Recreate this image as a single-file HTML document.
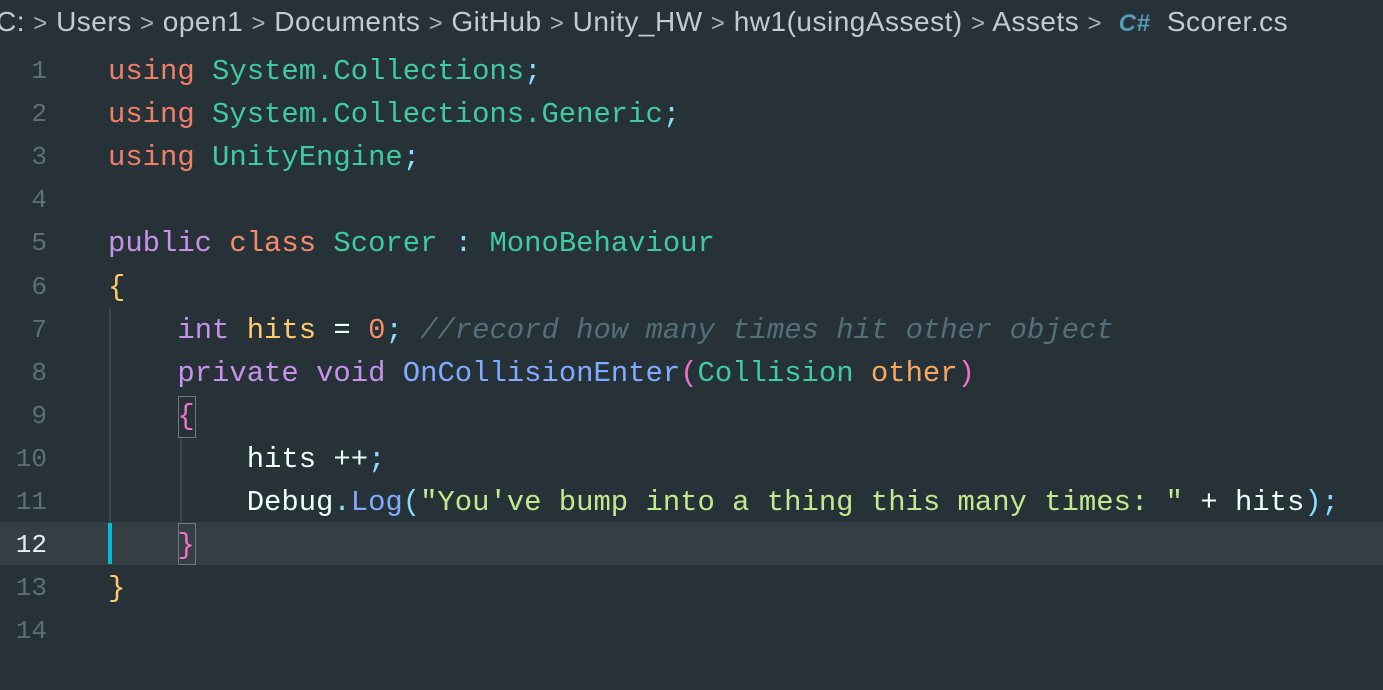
<!DOCTYPE html>
<html><head><style>
body{margin:0;width:1383px;height:690px;background:#263238;overflow:hidden;position:relative}
.bc{position:absolute;left:-4px;top:6px;font:28px "Liberation Sans",sans-serif;color:#c3cbd1;white-space:pre;letter-spacing:0.5px}
.bc .s{color:#a9b3ba;font-size:24px}
.ln{position:absolute;width:47px;text-align:right;font:26px "Liberation Mono",monospace;color:#5f6f76;left:0}
.code{position:absolute;left:108px;font:28.9px "Liberation Mono",monospace;white-space:pre;color:#eeffff}
.hl{position:absolute;left:0;top:522px;width:1383px;height:43px;background:#343e44}
.g{position:absolute;width:2px;background:#3a474d}
.k{color:#f07f68}.t{color:#3fcaa2}.p{color:#c792ea}.y{color:#ffcb6b}.o{color:#f78c6c}.c{color:#89ddff}.cm{color:#546e7a;font-style:italic}.b{color:#82aaff}.m{color:#f072c8}.s2{color:#c3e88d}.a{color:#f7a85c}
.box{position:absolute;width:16px;height:40px;border:1px solid #707a7e;left:178px}
</style></head><body>
<div class="hl"></div>
<div class="bc">C: <span class="s">&gt;</span> Users <span class="s">&gt;</span> open1 <span class="s">&gt;</span> Documents <span class="s">&gt;</span> GitHub <span class="s">&gt;</span> Unity_HW <span class="s">&gt;</span> hw1(usingAssest) <span class="s">&gt;</span> Assets <span class="s">&gt;</span>  <b style="color:#519aba;font-size:24px;font-style:italic">C#</b>  Scorer.cs</div>
<div class="g" style="left:109px;top:308px;height:214px"></div>
<div class="g" style="left:180px;top:438px;height:84px"></div>
<div style="position:absolute;left:108px;top:523px;width:4px;height:41px;background:#00bcd4"></div>
<div class="box" style="top:396px"></div>
<div class="box" style="top:523px"></div>
<div id="c"></div>
<script>
var L=[
'<span class="k">using</span> <span class="t">System.Collections</span><span class="c">;</span>',
'<span class="k">using</span> <span class="t">System.Collections.Generic</span><span class="c">;</span>',
'<span class="k">using</span> <span class="t">UnityEngine</span><span class="c">;</span>',
'',
'<span class="p">public</span> <span class="o">class</span> <span class="t">Scorer</span> <span class="c">:</span> <span class="t">MonoBehaviour</span>',
'<span class="y">{</span>',
'    <span class="p">int</span> <span class="y">hits</span> = <span class="o">0</span><span class="c">;</span> <span class="cm">//record how many times hit other object</span>',
'    <span class="p">private</span> <span class="p">void</span> <span class="b">OnCollisionEnter</span><span class="m">(</span><span class="t">Collision</span> <span class="a">other</span><span class="m">)</span>',
'    <span class="m">{</span>',
'        hits ++<span class="c">;</span>',
'        Debug<span class="c">.</span><span class="b">Log</span><span class="c">(</span><span class="s2">"You\'ve bump into a thing this many times: "</span> + hits<span class="c">);</span>',
'    <span class="m">}</span>',
'<span class="y">}</span>',
''];
var h='';
for(var i=0;i<14;i++){var y=50+i*43.1;
h+='<div class="ln" style="top:'+(y+6)+'px;'+(i==11?'color:#e6eef2':'')+'">'+(i+1)+'</div>';
h+='<div class="code" style="top:'+(y+5)+'px">'+L[i]+'</div>';}
document.getElementById('c').innerHTML=h;
</script>
</body></html>
